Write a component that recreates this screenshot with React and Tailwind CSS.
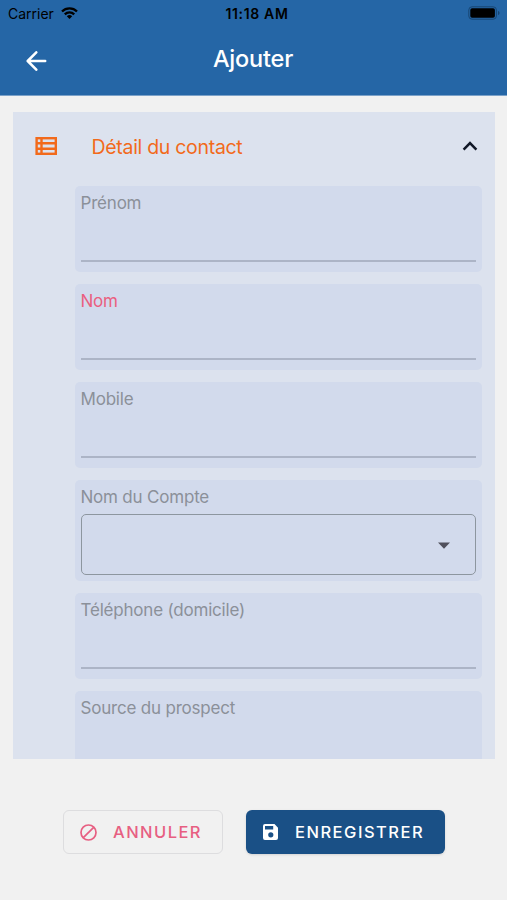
import React, { useState } from 'react';

const FIELDS = [
  { name: 'firstName', label: 'Prénom', type: 'text' },
  { name: 'lastName', label: 'Nom', type: 'text', required: true },
  { name: 'mobile', label: 'Mobile', type: 'text' },
  { name: 'account', label: 'Nom du Compte', type: 'select' },
  { name: 'homePhone', label: 'Téléphone (domicile)', type: 'text' },
  { name: 'source', label: 'Source du prospect', type: 'text' },
];

const StatusBar = () => (
  <div className="h-7 grid grid-cols-3 items-center pl-2 pr-[7px] text-black">
    <div className="flex items-center gap-[7px]">
      <span className="text-[14px] leading-7">Carrier</span>
      <svg className="w-[17px] h-3 -mt-0.5" viewBox="0 0 17 12">
        <g fill="none" stroke="currentColor" strokeWidth="2.3">
          <path d="M1 4.5a10.6 10.6 0 0 1 15 0" />
          <path d="M3.8 7.4a6.6 6.6 0 0 1 9.4 0" />
        </g>
        <path d="M8.5 12 5.8 9.3a3.8 3.8 0 0 1 5.4 0z" fill="currentColor" />
      </svg>
    </div>
    <span className="text-center text-[14px] leading-7 font-semibold tracking-[0.65px] ml-1.5">11:18 AM</span>
    <svg className="w-8 h-[14px] justify-self-end -mt-0.5" viewBox="0 0 32 14">
      <rect x="0.8" y="0.8" width="27.6" height="12.4" rx="3.2" fill="none" stroke="#174674" />
      <rect x="2.3" y="2.3" width="24.6" height="9.4" rx="1.8" fill="#000" />
      <path d="M30 5v4c1-.4 1.5-1.1 1.5-2S31 5.4 30 5z" fill="#174674" />
    </svg>
  </div>
);

const Field = ({ field, value, onChange }) => (
  <div className="shrink-0 rounded-[5px] bg-[#d2daec] px-1.5 pt-[7px]">
    <label
      htmlFor={field.name}
      className={`block text-[17px] leading-5 tracking-[-0.2px] ${field.required ? 'text-[#ea5f80]' : 'text-[#8b9099]'}`}
    >
      {field.label}
    </label>
    {field.type === 'select' ? (
      <button
        id={field.name}
        type="button"
        className="mt-[7px] mb-[6.5px] flex h-[61px] w-full items-center justify-end rounded-[5px] border-[1.5px] border-[#8d969f] pr-[25px]"
      >
        <svg className="w-3 h-[7px] mt-[3px]" viewBox="0 0 12 7">
          <path d="M0 0.5h12L6 6.7z" fill="#50505c" />
        </svg>
      </button>
    ) : (
      <input
        id={field.name}
        type="text"
        className="mb-[9.8px] block h-[49px] w-full border-b-2 border-[#acb4c6] text-[17px] outline-none"
        value={value}
        onChange={(e) => onChange(field.name, e.target.value)}
      />
    )}
  </div>
);

const App = () => {
  const [contact, setContact] = useState({});
  const [open, setOpen] = useState(true);

  const handleChange = (name, value) => {
    setContact({ ...contact, [name]: value });
  };

  return (
    <div className="flex h-[900px] w-[507px] flex-col overflow-hidden bg-[#f1f1f1] font-['Inter',sans-serif]">
      <header className="h-24 shrink-0 border-b border-[#7ba1c8] bg-[#2566a6]">
        <StatusBar />
        <div className="grid h-[65px] grid-cols-3 items-center px-[26px] text-white">
          <svg className="w-[21px] h-5" viewBox="0 0 21 20" fill="none" stroke="currentColor" strokeWidth="2.5">
            <path strokeLinecap="round" strokeLinejoin="round" d="M19.2 10H2M10.3 1.3 1.7 10l8.6 8.7" />
          </svg>
          <h1 className="text-center text-[23.5px] leading-7 font-medium tracking-[-0.2px] -mt-[3px] -ml-px">Ajouter</h1>
        </div>
      </header>

      <main className="mx-[13px] mr-[12px] mt-4 h-[646.5px] shrink-0 overflow-hidden bg-[#dce2ee]">
        <button
          type="button"
          onClick={() => setOpen(!open)}
          className="flex h-[74.2px] w-full items-center pl-[22px] pr-[17px] pb-1.5"
        >
          <svg className="w-[22px] h-[18px]" viewBox="0 0 22 18" fill="none" stroke="#f26a1b" strokeWidth="2.4">
            <rect x="1.6" y="1.2" width="19.2" height="15.6" />
            <path d="M6.5 1v16M1.2 6.3h19.6M1.2 11.7h19.6" />
          </svg>
          <span className="ml-[34.5px] mt-0.5 flex-1 text-left text-[19.5px] leading-7 tracking-[-0.3px] text-[#f26a1b]">
            Détail du contact
          </span>
          <svg className="w-4 h-[10px]" viewBox="0 0 16 10" fill="none" stroke="#111827" strokeWidth="2.5">
            <path d="m1.6 8.6 6.4-6.5 6.4 6.5" />
          </svg>
        </button>
        {open && (
          <div className="ml-[61.5px] mr-[13px] flex flex-col gap-3">
            {FIELDS.map((field) => (
              <Field
                key={field.name}
                field={field}
                value={contact[field.name] || ''}
                onChange={handleChange}
              />
            ))}
          </div>
        )}
      </main>

      <footer className="mt-[51.5px] flex gap-6 pl-[63px]">
        <button
          type="button"
          className="flex h-11 w-[160px] items-center rounded-md border border-[#dddddf] pl-4 text-[#e75f82]"
        >
          <svg className="w-[17px] h-[17px]" viewBox="0 0 17 17" fill="none" stroke="currentColor" strokeWidth="1.7">
            <circle cx="8.5" cy="8.5" r="7.5" />
            <path d="m3.3 13.7 10.4-10.4" />
          </svg>
          <span className="ml-4 text-[16.5px] font-medium tracking-[1.45px]">ANNULER</span>
        </button>
        <button
          type="button"
          className="-ml-px flex h-11 w-[199px] items-center rounded-md bg-[#1a5086] pl-[17px] text-white shadow-sm"
        >
          <svg className="w-[15px] h-4" viewBox="0 0 15 16">
            <path
              fillRule="evenodd"
              fill="currentColor"
              d="M2 0h9.5L15 3.8V14a2 2 0 0 1-2 2H2a2 2 0 0 1-2-2V2a2 2 0 0 1 2-2zM2 2v3.5h8.2V2zM7.8 8.2a2.6 2.6 0 1 0 0 5.2 2.6 2.6 0 0 0 0-5.2z"
            />
          </svg>
          <span className="ml-[17px] text-[16.5px] font-medium tracking-[1.5px]">ENREGISTRER</span>
        </button>
      </footer>
    </div>
  );
};

export default App;
